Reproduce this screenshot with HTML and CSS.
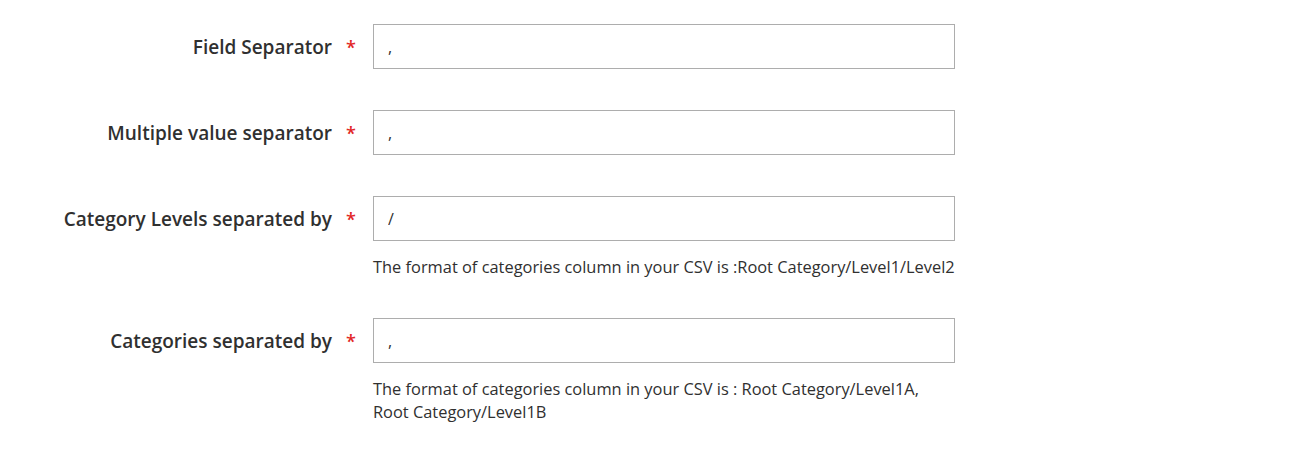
FILE: index.html
```html
<!DOCTYPE html>
<html lang="en">
<head>
    <meta charset="UTF-8">
    <meta name="viewport" content="width=device-width, initial-scale=1.0">
    <title>Import Settings</title>
    <link rel="stylesheet" href="styles.css">
</head>
<body>
    <form class="import-form">
        <div class="field">
            <label class="field-label" for="field-separator"><span>Field Separator</span><span class="req">*</span></label>
            <div class="field-control">
                <input class="text-input" id="field-separator" type="text" value=",">
            </div>
        </div>

        <div class="field">
            <label class="field-label" for="multi-separator"><span>Multiple value separator</span><span class="req">*</span></label>
            <div class="field-control">
                <input class="text-input" id="multi-separator" type="text" value=",">
            </div>
        </div>

        <div class="field">
            <label class="field-label" for="level-separator"><span>Category Levels separated by</span><span class="req">*</span></label>
            <div class="field-control">
                <input class="text-input" id="level-separator" type="text" value="/">
                <div class="note">The format of categories column in your CSV is :Root Category/Level1/Level2</div>
            </div>
        </div>

        <div class="field">
            <label class="field-label" for="cat-separator"><span>Categories separated by</span><span class="req">*</span></label>
            <div class="field-control">
                <input class="text-input" id="cat-separator" type="text" value=",">
                <div class="note">The format of categories column in your CSV is : Root Category/Level1A, Root Category/Level1B</div>
            </div>
        </div>
    </form>
</body>
</html>
```

FILE: styles.css
```css
body {
    margin: 0;
    background-color: #fff;
    font-family: 'Open Sans', 'Liberation Sans', sans-serif;
    color: #303030;
}

.import-form {
    padding-top: 24px;
    display: flex;
    flex-direction: column;
    gap: 41px;
}

.field {
    display: grid;
    grid-template-columns: 359px 582px;
    column-gap: 14px;
    align-items: start;
}

.field-label {
    height: 45px;
    padding-top: 1px;
    box-sizing: border-box;
    display: flex;
    align-items: center;
    justify-content: flex-end;
    font-size: 19px;
    font-weight: 600;
    color: #303030;
}

.req {
    color: #e22626;
    font-size: 18px;
    margin-left: 14px;
    width: 13px;
}

.text-input {
    display: block;
    box-sizing: border-box;
    width: 582px;
    height: 45px;
    border: 1px solid #adadad;
    padding: 0 14px;
    font-family: 'Open Sans', 'Liberation Sans', sans-serif;
    font-size: 16px;
    color: #303030;
    outline: none;
}

.note {
    margin-top: 14px;
    margin-bottom: -1px;
    font-size: 16.4px;
    line-height: 23px;
    color: #303030;
}
```
